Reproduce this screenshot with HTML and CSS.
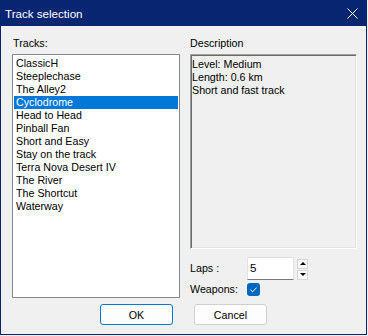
FILE: index.html
```html
<!DOCTYPE html>
<html lang="en">
<head>
    <meta charset="UTF-8">
    <meta name="viewport" content="width=device-width, initial-scale=1.0">
    <title>Track selection</title>
    <link rel="stylesheet" href="styles.css">
</head>
<body>
    <div class="window">
        <div class="titlebar">
            <span class="title">Track selection</span>
            <svg class="close" width="11" height="11" viewBox="0 0 11 11">
                <path d="M0.5 0.5 L10.5 10.5 M10.5 0.5 L0.5 10.5" stroke="#fff" stroke-width="1" fill="none"/>
            </svg>
        </div>

        <div class="content">
            <div class="columns">
                <div class="col col-left">
                    <div class="label">Tracks:</div>
                    <ul class="listbox">
                        <li>ClassicH</li>
                        <li>Steeplechase</li>
                        <li>The Alley2</li>
                        <li class="selected">Cyclodrome</li>
                        <li>Head to Head</li>
                        <li>Pinball Fan</li>
                        <li>Short and Easy</li>
                        <li>Stay on the track</li>
                        <li>Terra Nova Desert IV</li>
                        <li>The River</li>
                        <li>The Shortcut</li>
                        <li>Waterway</li>
                    </ul>
                </div>

                <div class="col col-right">
                    <div class="label">Description</div>
                    <div class="desc">
                        Level: Medium<br>
                        Length: 0.6 km<br>
                        Short and fast track
                    </div>

                    <div class="laps-row">
                        <span class="field-label">Laps :</span>
                        <div class="spin-input">5</div>
                        <div class="spin-buttons">
                            <div class="spin-btn"><span class="tri up"></span></div>
                            <div class="spin-btn"><span class="tri down"></span></div>
                        </div>
                    </div>

                    <div class="weapons-row">
                        <span class="field-label">Weapons:</span>
                        <span class="checkbox">
                            <svg width="13" height="13" viewBox="0 0 13 13">
                                <path d="M3.5 6.8 L5.6 8.8 L9.6 4.6" stroke="#fff" stroke-width="1" fill="none"/>
                            </svg>
                        </span>
                    </div>
                </div>
            </div>

            <div class="buttons">
                <button class="btn btn-default">OK</button>
                <button class="btn">Cancel</button>
            </div>
        </div>
    </div>
</body>
</html>
```

FILE: styles.css
```css
body {
    margin: 0;
    background: #f0f0f0;
    font-family: 'Liberation Sans', Arial, sans-serif;
    font-size: 10.7px;
    line-height: 13px;
    color: #000;
}
.window {
    width: 365px;
    height: 334px;
    border-left: 1px solid #072571;
    border-right: 1px solid #072571;
    border-bottom: 1px solid #072571;
    background: #f0f0f0;
    display: flex;
    flex-direction: column;
}
.titlebar {
    height: 26px;
    background: #072571;
    display: flex;
    align-items: center;
    justify-content: space-between;
    padding: 0 8px 0 4px;
}
.title {
    color: #fff;
    font-size: 11.6px;
    margin-top: 1px;
}
.close {
    display: block;
    margin-top: 1px;
}
.content {
    padding: 11px 9px 0 11px;
}
.columns {
    display: flex;
    gap: 10px;
}
.col {
    display: flex;
    flex-direction: column;
}
.col-left {
    width: 168px;
}
.col-right {
    width: 167px;
}
.label {
    height: 13px;
    margin-bottom: 4px;
    padding-left: 1px;
}
.col-right .label {
    padding-left: 0;
}
.listbox {
    list-style: none;
    margin: 0;
    padding: 2px 1px 0 1px;
    height: 240px;
    border: 1px solid #828790;
    background: #fff;
}
.listbox li {
    height: 13px;
    padding-left: 2px;
    white-space: nowrap;
}
.listbox li.selected {
    background: #0078d7;
    color: #fff;
}
.desc {
    height: 190px;
    padding: 3px 0 0 1px;
    border-top: 1px solid #a0a0a0;
    border-left: 1px solid #a0a0a0;
    border-right: 1px solid #fff;
    border-bottom: 1px solid #fff;
    box-shadow: inset 1px 1px 0 #696969, inset -1px -1px 0 #e3e3e3;
}
.laps-row {
    display: flex;
    align-items: center;
    margin-top: 8px;
    height: 23px;
}
.field-label {
    width: 57px;
    flex-shrink: 0;
}
.spin-input {
    width: 43px;
    height: 21px;
    background: #fff;
    border: 1px solid #e2e2e2;
    border-bottom-color: #7a7a7a;
    padding-left: 2px;
    font-size: 11.5px;
    line-height: 20px;
}
.spin-buttons {
    display: flex;
    flex-direction: column;
    gap: 1px;
    margin-left: 3px;
    margin-top: 1px;
}
.spin-btn {
    width: 9px;
    height: 8px;
    border: 1px solid #d6d6d6;
    background: #fbfbfb;
    display: flex;
    align-items: center;
    justify-content: center;
}
.tri {
    width: 0;
    height: 0;
    border-left: 3px solid transparent;
    border-right: 3px solid transparent;
}
.tri.up {
    border-bottom: 3px solid #000;
}
.tri.down {
    border-top: 3px solid #000;
}
.weapons-row {
    display: flex;
    align-items: center;
    margin-top: 2px;
    height: 15px;
}
.checkbox {
    width: 13px;
    height: 13px;
    background: #0067c0;
    border-radius: 3px;
    display: block;
}
.checkbox svg {
    display: block;
}
.buttons {
    display: flex;
    justify-content: center;
    gap: 21px;
    margin-top: 6px;
    padding-right: 2px;
}
.btn {
    width: 73px;
    height: 21px;
    padding: 0;
    font-family: 'Liberation Sans', Arial, sans-serif;
    font-size: 10.7px;
    background: #fdfdfd;
    border: 1px solid #d0d0d0;
    border-radius: 3px;
    color: #000;
}
.btn-default {
    border-color: #0078d4;
}
```
